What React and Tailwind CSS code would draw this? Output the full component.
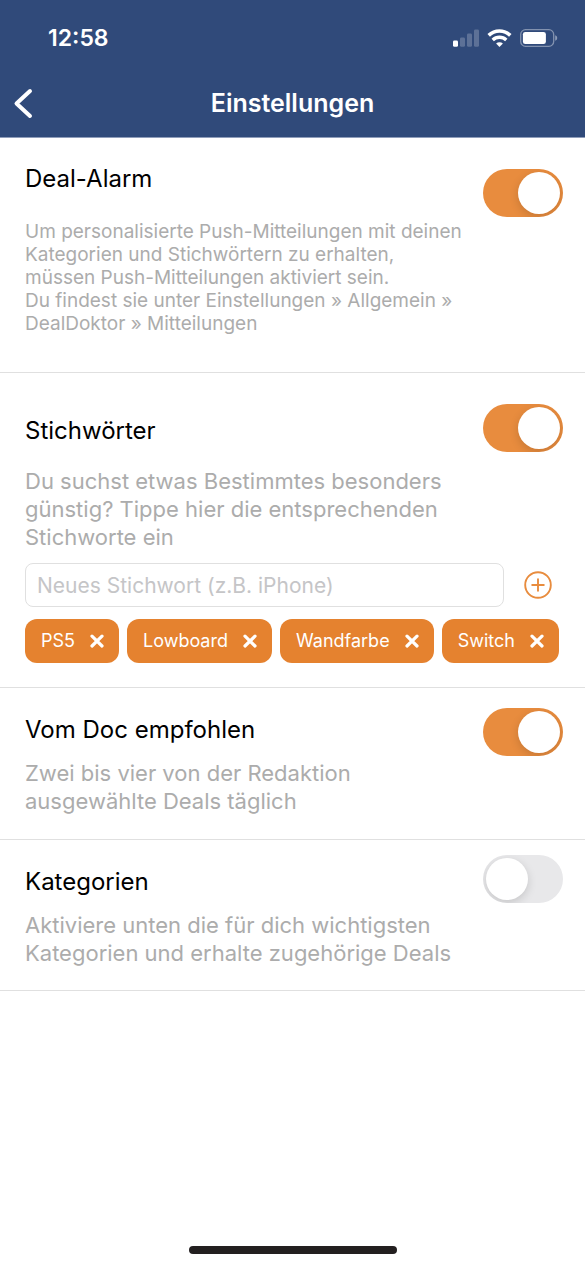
import { useState } from "react";

const initialKeywords = ["PS5", "Lowboard", "Wandfarbe", "Switch"];

function StatusBar() {
  return (
    <div className="flex h-[76px] items-center justify-between pl-12 pr-[27px] text-white">
      <span className="text-[23px] leading-7 font-semibold">12:58</span>
      <div className="flex items-center gap-2">
        {/* Mobilfunk */}
        <svg width="26" height="18" viewBox="0 0 26 18" fill="#fff" aria-hidden="true">
          <rect x="0" y="11.5" width="5" height="6.3" rx="1.4" />
          <rect x="7" y="8.6" width="5" height="9.2" rx="1.4" opacity="0.22" />
          <rect x="14" y="4.6" width="5" height="13.2" rx="1.4" opacity="0.22" />
          <rect x="21" y="0.4" width="5" height="17.4" rx="1.4" opacity="0.22" />
        </svg>
        {/* WLAN */}
        <svg width="25" height="18" viewBox="0 0 25 18" fill="none" stroke="#fff" aria-hidden="true">
          <path d="M1.7 6.4a15.6 15.6 0 0 1 21.6 0" strokeWidth="3.6" />
          <path d="M5.7 10.9a9.9 9.9 0 0 1 13.6 0" strokeWidth="3.4" />
          <path d="M12.5 18l-3.4-3.4a4.9 4.9 0 0 1 6.8 0z" fill="#fff" stroke="none" />
        </svg>
        {/* Akku */}
        <svg width="38" height="18" viewBox="0 0 38 18" aria-hidden="true">
          <rect x="0.7" y="0.7" width="33" height="16.6" rx="4.8" fill="none" stroke="#fff" strokeOpacity="0.4" strokeWidth="1.3" />
          <rect x="2.9" y="2.9" width="23" height="12.2" rx="2.4" fill="#fff" />
          <path d="M35.2 6.2c1.3.4 2 1.500 2 2.800s-.7 2.400-2 2.800z" fill="#fff" fillOpacity="0.45" />
        </svg>
      </div>
    </div>
  );
}

function Toggle({ id, defaultChecked }) {
  return (
    <input
      id={id}
      type="checkbox"
      role="switch"
      defaultChecked={defaultChecked}
      className="h-12 w-20 shrink-0 cursor-pointer appearance-none overflow-hidden rounded-full bg-[#e8e8ea] p-[3px] before:block before:size-[42px] before:rounded-full before:bg-white before:shadow-[0_3px_10px_rgba(0,0,0,0.15)] before:transition-transform checked:bg-[#e88c3e] checked:before:translate-x-8"
    />
  );
}

function Title({ htmlFor, children }) {
  return (
    <label htmlFor={htmlFor} className="block text-2xl leading-7 text-black">
      {children}
    </label>
  );
}

function Description({ children }) {
  return <p className="text-[22px] leading-7 whitespace-pre-line text-[#acacac]">{children}</p>;
}

export default function App() {
  const [keywords, setKeywords] = useState(initialKeywords);
  const [draft, setDraft] = useState("");

  const addKeyword = (e) => {
    e.preventDefault();
    const value = draft.trim();
    if (value && !keywords.includes(value)) setKeywords([...keywords, value]);
    setDraft("");
  };

  return (
    <div className="flex min-h-screen flex-col bg-white font-['Inter',sans-serif]">
      <header className="border-b border-[#8f9dba] bg-[#304a7a]">
        <StatusBar />
        <div className="grid h-[61px] grid-cols-[1fr_auto_1fr] items-center px-3 pb-2 text-white">
          <button type="button" aria-label="Zurück" className="justify-self-start">
            <svg width="22" height="32" viewBox="0 0 22 32" fill="none" stroke="#fff" strokeWidth="4" strokeLinecap="round" strokeLinejoin="round" aria-hidden="true">
              <path d="M18 4L4.500 16.500L18 29" />
            </svg>
          </button>
          <h1 className="text-[25px] leading-8 font-semibold">Einstellungen</h1>
        </div>
      </header>

      <main>
        {/* Deal-Alarm */}
        <section className="flex items-start justify-between border-b border-[#e0e0e0] pt-[27px] pr-[22px] pb-[37px] pl-[25px]">
          <div>
            <Title htmlFor="alarm">Deal-Alarm</Title>
            <p className="mt-[27px] text-[19px] leading-[23px] whitespace-pre-line text-[#acacac]">
              {"Um personalisierte Push-Mitteilungen mit deinen\nKategorien und Stichwörtern zu erhalten,\nmüssen Push-Mitteilungen aktiviert sein.\nDu findest sie unter Einstellungen » Allgemein »\nDealDoktor » Mitteilungen"}
            </p>
          </div>
          <div className="flex pt-1">
            <Toggle id="alarm" defaultChecked />
          </div>
        </section>

        {/* Stichwörter */}
        <section className="border-b border-[#e0e0e0] pt-[31px] pr-[22px] pb-6 pl-[25px]">
          <div className="flex items-start justify-between">
            <div className="pt-[13px]">
              <Title htmlFor="keywords">Stichwörter</Title>
              <div className="mt-[22px]">
                <Description>{"Du suchst etwas Bestimmtes besonders\ngünstig? Tippe hier die entsprechenden\nStichworte ein"}</Description>
              </div>
            </div>
            <Toggle id="keywords" defaultChecked />
          </div>

          <form onSubmit={addKeyword} className="mt-3 flex items-center gap-5 pr-[11px]">
            <input
              type="text"
              aria-label="Neues Stichwort"
              placeholder="Neues Stichwort (z.B. iPhone)"
              value={draft}
              onChange={(e) => setDraft(e.target.value)}
              className="h-11 min-w-0 flex-1 rounded-lg border border-[#e0e0e0] px-[11px] text-[21px] leading-7 placeholder:text-[#c5c5c7]"
            />
            <button type="submit" aria-label="Hinzufügen">
              <svg width="28" height="28" viewBox="0 0 28 28" fill="none" stroke="#e88c3e" strokeWidth="1.9" strokeLinecap="round" aria-hidden="true">
                <circle cx="14" cy="14" r="12.800" />
                <path d="M14 8.200v11.600M8.200 14h11.600" />
              </svg>
            </button>
          </form>

          <ul className="mt-3 flex flex-wrap gap-2">
            {keywords.map((word) => (
              <li key={word} className="flex h-11 items-center gap-[15px] rounded-xl bg-[#e5822f] pr-[15px] pl-4 text-lg leading-6 text-white">
                {word}
                <button type="button" aria-label={`${word} entfernen`} onClick={() => setKeywords(keywords.filter((k) => k !== word))}>
                  <svg width="14" height="14" viewBox="0 0 14 14" stroke="#fff" strokeWidth="3.200" strokeLinecap="round" aria-hidden="true">
                    <path d="M2 2.200l10 9.800M12 2.200L2 12" />
                  </svg>
                </button>
              </li>
            ))}
          </ul>
        </section>

        {/* Vom Doc empfohlen */}
        <section className="flex items-start justify-between border-b border-[#e0e0e0] pt-5 pr-[22px] pb-6 pl-[25px]">
          <div className="pt-2">
            <Title htmlFor="doc">Vom Doc empfohlen</Title>
            <div className="mt-[15px]">
              <Description>{"Zwei bis vier von der Redaktion\nausgewählte Deals täglich"}</Description>
            </div>
          </div>
          <Toggle id="doc" defaultChecked />
        </section>

        {/* Kategorien */}
        <section className="flex items-start justify-between border-b border-[#e0e0e0] pt-[15px] pr-[22px] pb-[23px] pl-[25px]">
          <div className="pt-[13px]">
            <Title htmlFor="categories">Kategorien</Title>
            <div className="mt-[15px]">
              <Description>{"Aktiviere unten die für dich wichtigsten\nKategorien und erhalte zugehörige Deals"}</Description>
            </div>
          </div>
          <Toggle id="categories" />
        </section>
      </main>

      {/* Home-Indikator */}
      <div className="mt-auto flex justify-center pt-8 pb-3">
        <div className="h-2 w-[208px] rounded-full bg-[#231f20]" />
      </div>
    </div>
  );
}
